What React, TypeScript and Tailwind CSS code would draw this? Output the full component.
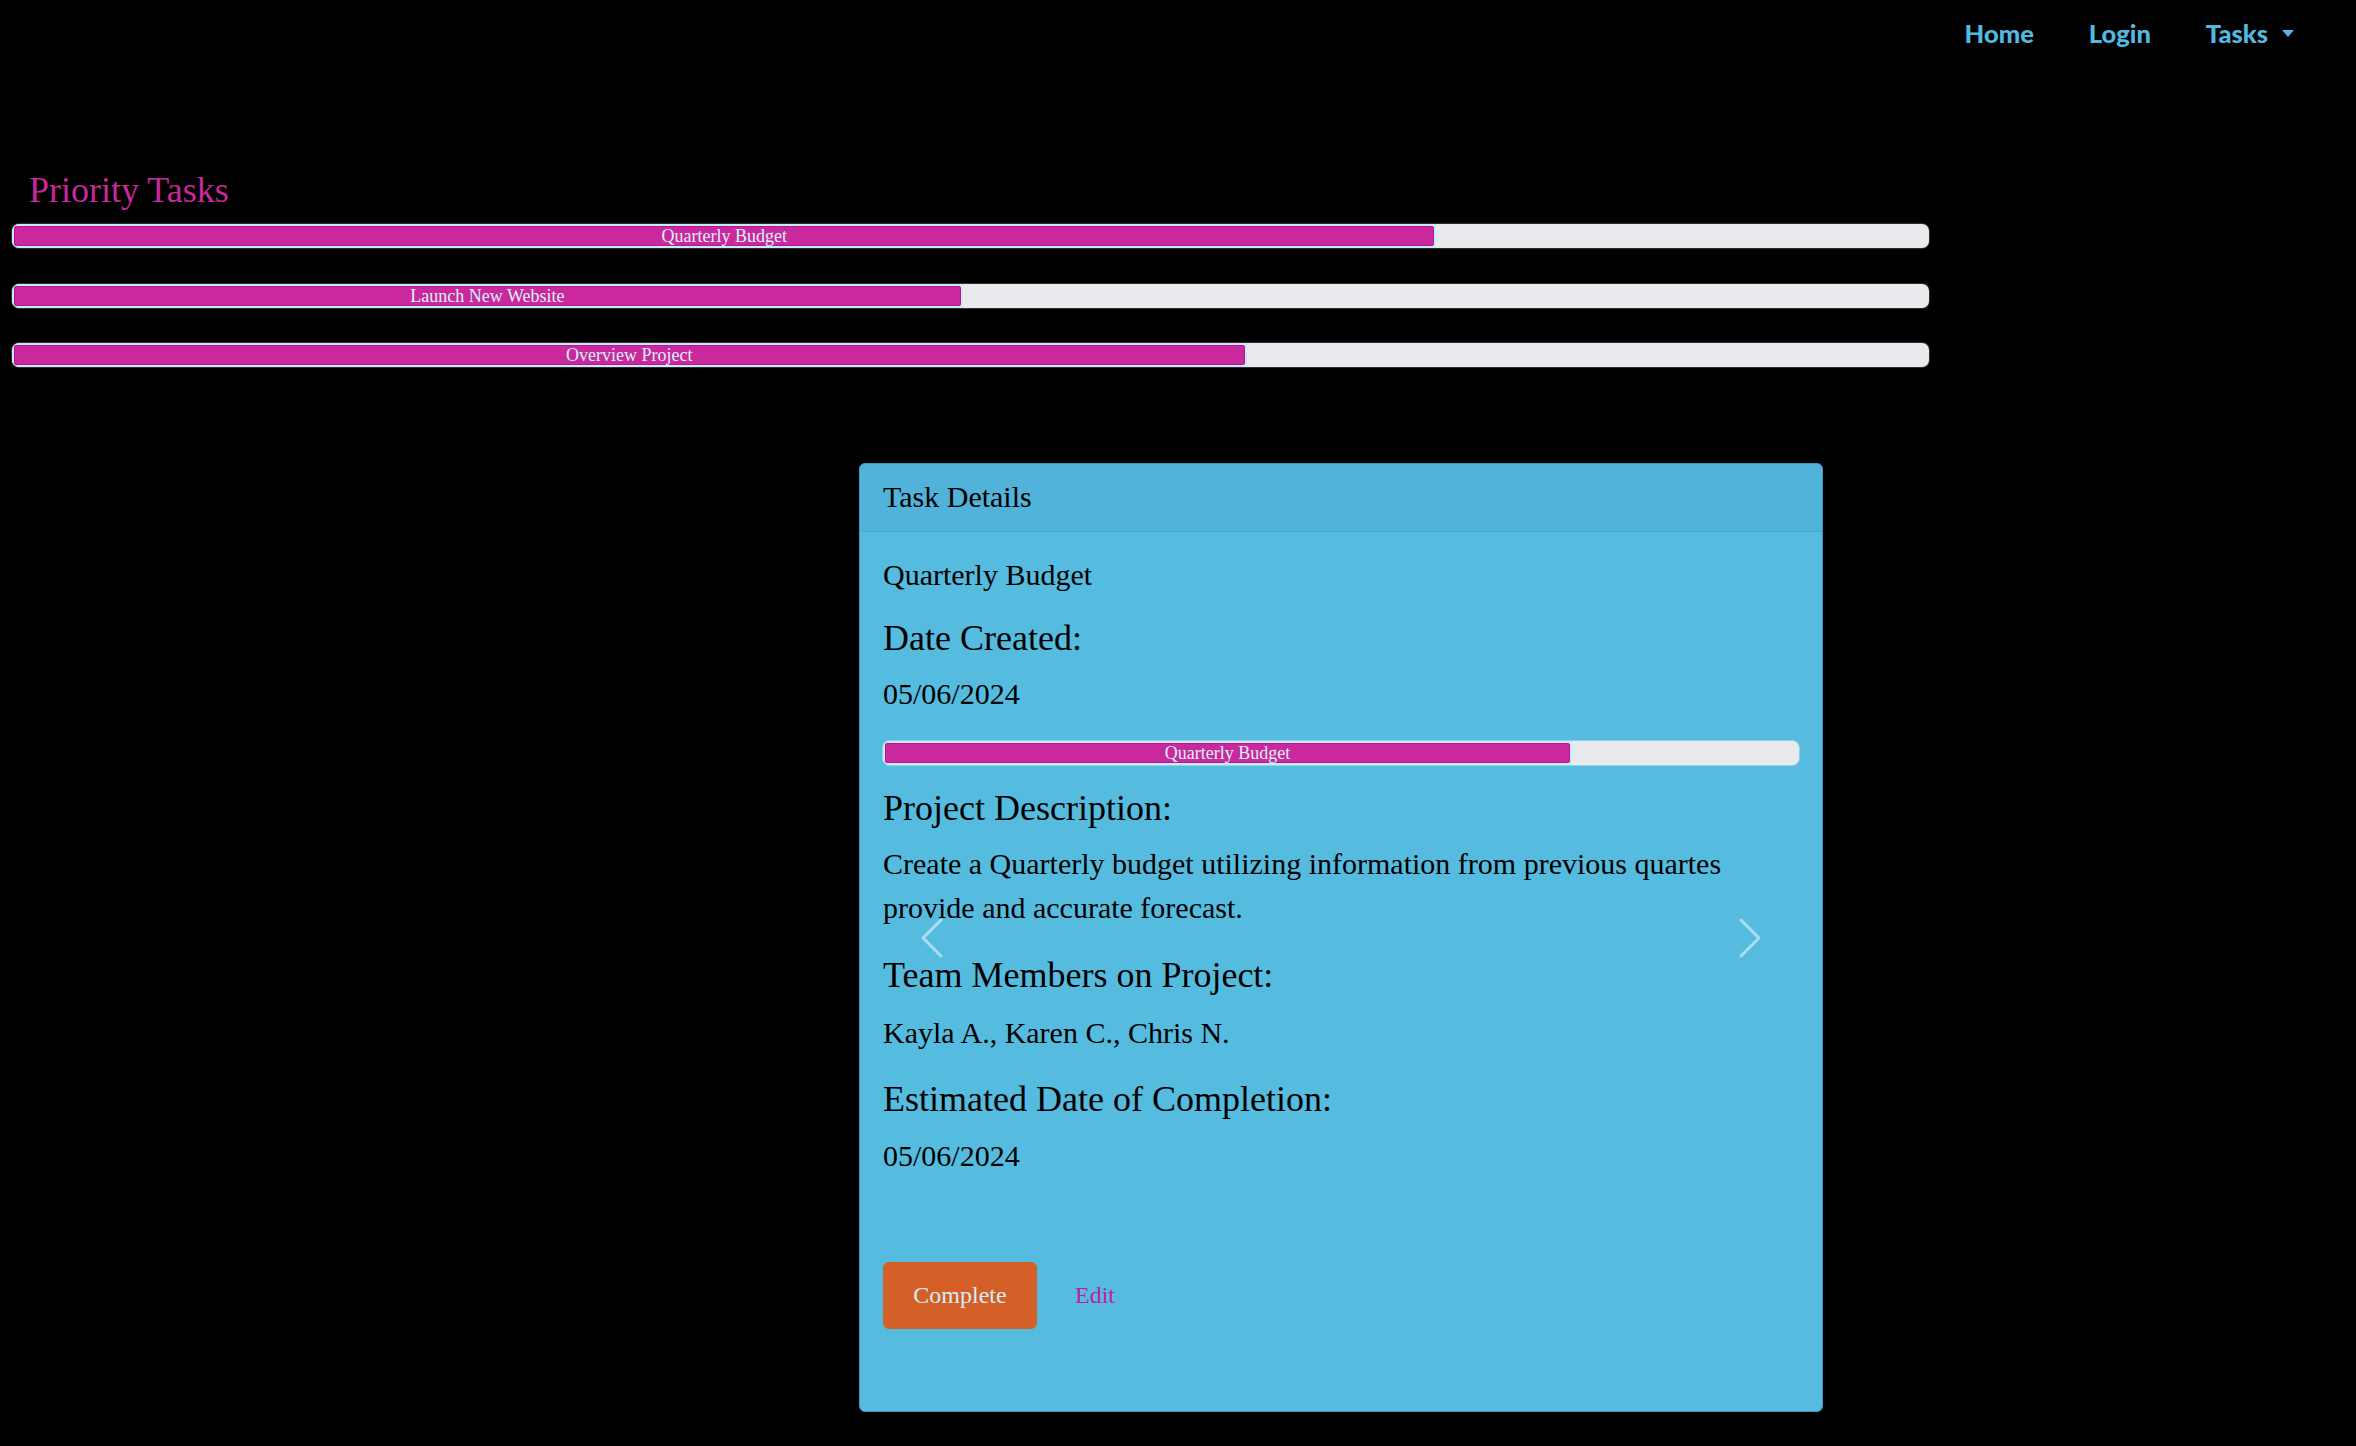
import React from "react";

const SERIF = "font-['Liberation_Serif',serif]";

function Bar({ label, pct, thin }: { label: string; pct: number; thin?: boolean }) {
  return (
    <div
      className={`flex h-[24px] overflow-hidden rounded-[7px] bg-[#e9eaee] ${
        thin ? "shadow-[0_0_0_1px_#8fd3ea]" : "shadow-[0_0_0_1px_#2f2f2f]"
      }`}
    >
      <div className="h-full rounded-l-[7px] bg-[#c6edf6] p-[2px]" style={{ width: `${pct}%` }}>
        <div
          className={`flex h-full items-center justify-center rounded-[2px] border border-[#c0109a] bg-[#c9299d] text-[18px] leading-none text-[#d8f2f9] ${SERIF}`}
        >
          {label}
        </div>
      </div>
    </div>
  );
}

function Chevron({ dir }: { dir: "prev" | "next" }) {
  const d =
    dir === "prev"
      ? "M11.354 1.646a.5.5 0 0 1 0 .708L5.707 8l5.647 5.646a.5.5 0 0 1-.708.708l-6-6a.5.5 0 0 1 0-.708l6-6a.5.5 0 0 1 .708 0z"
      : "M4.646 1.646a.5.5 0 0 1 .708 0l6 6a.5.5 0 0 1 0 .708l-6 6a.5.5 0 0 1-.708-.708L10.293 8 4.646 2.354a.5.5 0 0 1 0-.708z";
  return (
    <svg width="48" height="48" viewBox="0 0 16 16" fill="#ffffff">
      <path d={d} />
    </svg>
  );
}

export default function App() {
  return (
    <div className="min-h-[1446px] w-full bg-black">
      {/* Nav */}
      <nav className="flex h-[68px] items-start justify-end gap-[55px] pr-[62px] pt-[14.5px] font-['Lato',sans-serif] text-[25.5px] font-black leading-[36px] text-[#52b9e0]">
        <span>Home</span>
        <span>Login</span>
        <span className="flex items-center">
          Tasks
          <span className="ml-[14px] mt-[2px] inline-block h-0 w-0 border-x-[6px] border-t-[7px] border-x-transparent border-t-[#52b9e0]" />
        </span>
      </nav>

      {/* Priority tasks */}
      <section className="mt-[101px]">
        <h2 className={`ml-[29px] text-[36px] leading-[43px] text-[#c8289b] ${SERIF}`}>Priority Tasks</h2>
        <div className="ml-[12px] mt-[12px] flex w-[1917px] flex-col gap-[35.5px]">
          <Bar label="Quarterly Budget" pct={74.3} />
          <Bar label="Launch New Website" pct={49.6} />
          <Bar label="Overview Project" pct={64.4} />
        </div>
      </section>

      {/* Card */}
      <div
        className={`relative ml-[859px] mt-[96px] w-[964px] overflow-hidden rounded-[6px] border border-[#3f96b8] bg-[#55bbdf] text-black shadow-[0_2px_3px_rgba(0,0,0,0.6)] ${SERIF}`}
      >
        <div className="border-b border-[#49a7cb] bg-[#51b3d9] px-[23px] pb-[12px] pt-[10px] text-[30px] leading-[45px]">
          Task Details
        </div>
        <div className="px-[23px] pb-[82.5px] pt-[19.5px]">
          <p className="text-[30px] leading-[45px]">Quarterly Budget</p>
          <h4 className="mt-[20px] text-[36px] leading-[43.2px]">Date Created:</h4>
          <p className="mt-[11.5px] text-[30px] leading-[45px]">05/06/2024</p>
          <div className="mt-[24.5px] w-[916px]">
            <Bar label="Quarterly Budget" pct={75.2} thin />
          </div>
          <h4 className="mt-[22px] text-[36px] leading-[43.2px]">Project Description:</h4>
          <p className="mt-[12.5px] text-[30px] leading-[44px]">
            Create a Quarterly budget utilizing information from previous quartes provide and accurate forecast.
          </p>
          <h4 className="mt-[24px] text-[36px] leading-[43.2px]">Team Members on Project:</h4>
          <p className="mt-[12px] text-[30px] leading-[45px]">Kayla A., Karen C., Chris N.</p>
          <h4 className="mt-[23px] text-[36px] leading-[43.2px]">Estimated Date of Completion:</h4>
          <p className="mt-[12px] text-[30px] leading-[45px]">05/06/2024</p>
          <div className="mt-[84px] flex items-center gap-[38px]">
            <button className="flex h-[67px] w-[154px] items-center justify-center rounded-[6px] bg-[#d46027] text-[24px] leading-none text-[#d2eef6]">
              Complete
            </button>
            <span className="text-[24px] leading-none text-[#c21ea0]">Edit</span>
          </div>
        </div>

        {/* carousel controls */}
        <div className="absolute inset-y-0 left-0 flex w-[15%] items-center justify-center opacity-50">
          <Chevron dir="prev" />
        </div>
        <div className="absolute inset-y-0 right-0 flex w-[15%] items-center justify-center opacity-50">
          <Chevron dir="next" />
        </div>
      </div>
    </div>
  );
}
